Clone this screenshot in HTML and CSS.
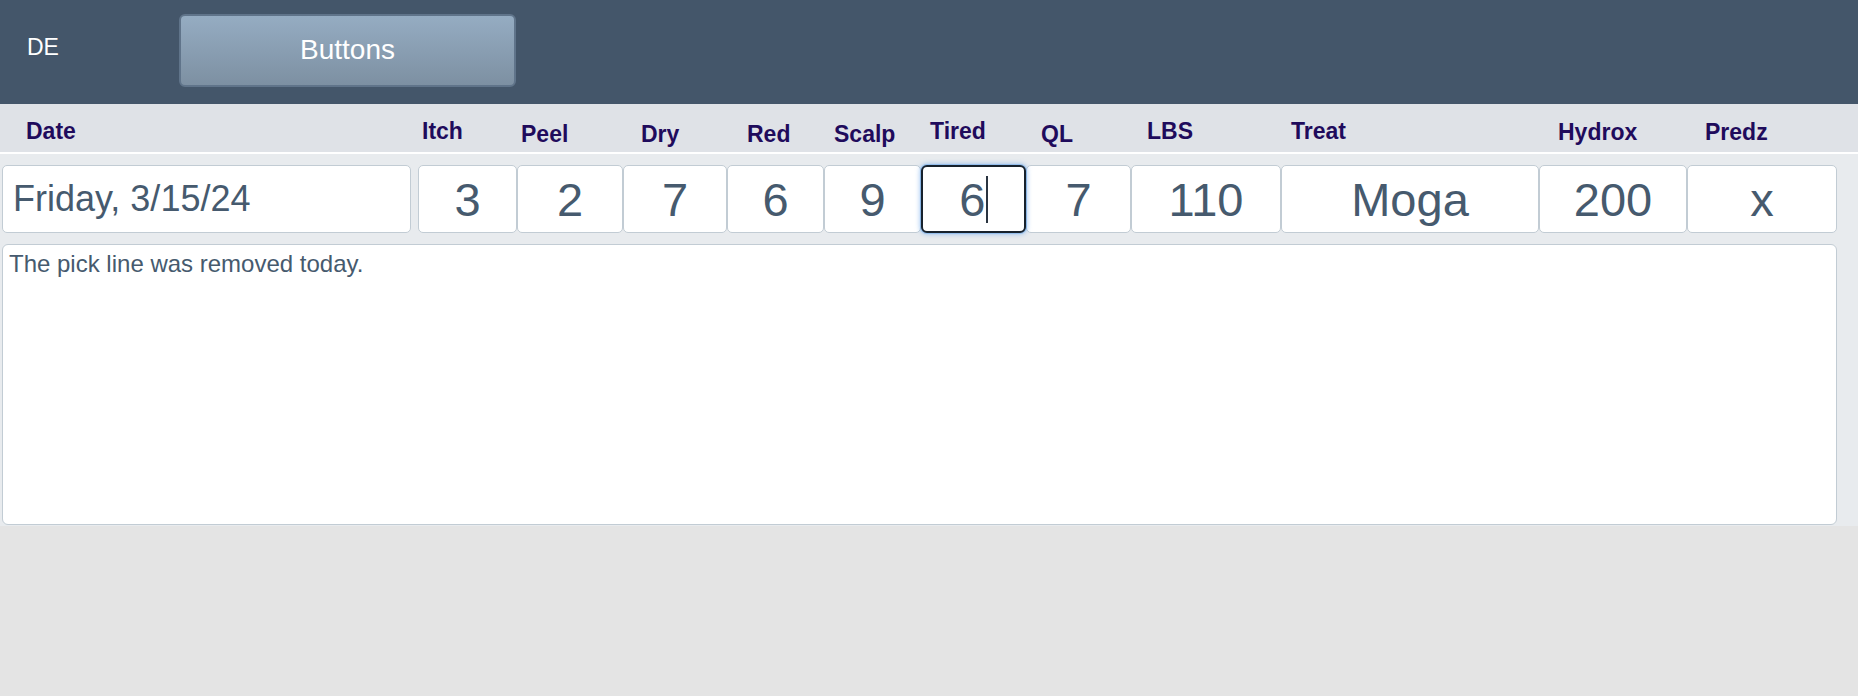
FILE: index.html
```html
<!DOCTYPE html>
<html lang="en">
<head>
<meta charset="utf-8">
<title>DE</title>
<link rel="stylesheet" href="styles.css">
</head>
<body>
<header class="topbar">
  <div class="brand">DE</div>
  <div class="btn">Buttons</div>
</header>
<div class="labels cols">
  <div class="lbl l-date">Date</div>
  <div class="lbl l-itch">Itch</div>
  <div class="lbl low l-peel">Peel</div>
  <div class="lbl low l-dry">Dry</div>
  <div class="lbl low l-red">Red</div>
  <div class="lbl low l-scalp">Scalp</div>
  <div class="lbl l-tired">Tired</div>
  <div class="lbl low l-ql">QL</div>
  <div class="lbl l-lbs">LBS</div>
  <div class="lbl l-treat">Treat</div>
  <div class="lbl mid l-hydrox">Hydrox</div>
  <div class="lbl mid l-predz">Predz</div>
</div>
<main class="content">
  <div class="cols fields">
    <div class="field date">Friday, 3/15/24</div>
    <div class="field num">3</div>
    <div class="field num">2</div>
    <div class="field num">7</div>
    <div class="field num">6</div>
    <div class="field num">9</div>
    <div class="field num focus">6<span class="caret"></span></div>
    <div class="field num">7</div>
    <div class="field num">110</div>
    <div class="field num">Moga</div>
    <div class="field num">200</div>
    <div class="field num">x</div>
  </div>
  <div class="notes">The pick line was removed today.</div>
</main>
</body>
</html>
```

FILE: styles.css
```css
html, body {
  margin: 0;
  padding: 0;
}
body {
  background: #e4e4e4;
  font-family: "Liberation Sans", Arial, sans-serif;
  width: 1858px;
  height: 696px;
  overflow: hidden;
}
.topbar {
  height: 104px;
  background: #44566a;
  display: flex;
  align-items: flex-start;
  padding-left: 27px;
  box-sizing: border-box;
}
.brand {
  width: 152px;
  margin-top: 34px;
  color: #ffffff;
  font-size: 23px;
  line-height: 26px;
}
.btn {
  margin-top: 14px;
  width: 337px;
  height: 73px;
  box-sizing: border-box;
  border: 2px solid #60748a;
  border-radius: 6px;
  background: linear-gradient(#95acc2, #7d90a2);
  color: #ffffff;
  font-size: 28px;
  display: flex;
  align-items: center;
  justify-content: center;
  padding-bottom: 1px;
}
.cols {
  display: grid;
  grid-template-columns: 416px 99px 106px 104px 97px 97px 105px 105px 150px 258px 148px 150px;
  padding-left: 2px;
}
.labels {
  height: 48px;
  background: #dfe2e7;
  border-bottom: 2px solid #ffffff;
  box-sizing: content-box;
}
.lbl {
  padding-top: 14px;
  font-size: 23px;
  line-height: 26px;
  font-weight: bold;
  color: #1f0b5c;
}
.lbl.low { padding-top: 17px; }
.lbl.mid { padding-top: 15px; }
.l-date { padding-left: 24px; }
.l-itch { padding-left: 4px; }
.l-peel { padding-left: 4px; }
.l-dry { padding-left: 18px; }
.l-red { padding-left: 20px; }
.l-scalp { padding-left: 10px; }
.l-tired { padding-left: 9px; }
.l-ql { padding-left: 15px; }
.l-lbs { padding-left: 16px; }
.l-treat { padding-left: 10px; }
.l-hydrox { padding-left: 19px; }
.l-predz { padding-left: 18px; }

.content {
  background: #e8ebee;
  padding: 11px 0 2px 0;
  height: 372px;
  box-sizing: border-box;
}
.field {
  height: 68px;
  box-sizing: border-box;
  background: #ffffff;
  border: 1.5px solid #c2ccd4;
  border-radius: 5px;
  color: #465a6e;
  display: flex;
  align-items: center;
}
.field.date {
  width: 409px;
  font-size: 36px;
  padding-left: 10px;
}
.field.num {
  justify-content: center;
  font-size: 47px;
}
.field.focus {
  border: 2px solid #17222d;
  border-radius: 6px;
  box-shadow: 0 0 0 1px rgba(120, 175, 235, 0.55), 0 0 5px 1px rgba(95, 160, 235, 0.6);
  position: relative;
  z-index: 1;
}
.caret {
  display: inline-block;
  width: 1.5px;
  height: 47px;
  background: #2a3440;
  margin-left: 1px;
}
.notes {
  margin: 11px 0 0 2px;
  width: 1835px;
  height: 281px;
  box-sizing: border-box;
  background: #ffffff;
  border: 1.5px solid #c2ccd4;
  border-radius: 6px;
  padding: 5px 6px;
  color: #465a6e;
  font-size: 24px;
  line-height: 27px;
}
```
